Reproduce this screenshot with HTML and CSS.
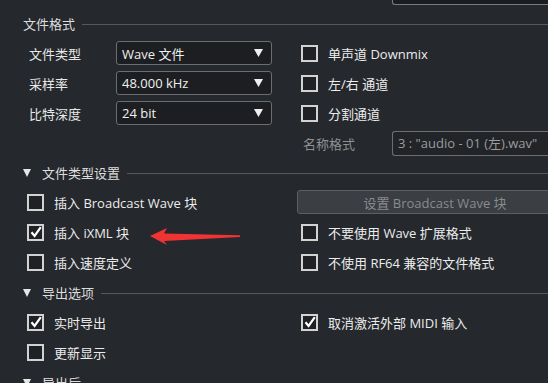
FILE: index.html
```html
<!DOCTYPE html>
<html>
<head>
<meta charset="utf-8">
<link rel="stylesheet" href="styles.css">
</head>
<body>
<div class="page">
  <div class="prev"><div class="prev-box"></div></div>

  <div class="section s1">
    <div class="head"><span class="head-text">文件格式</span><span class="rule"></span></div>
    <div class="grid">
      <div class="cell"><span class="flabel">文件类型</span><div class="select"><span>Wave 文件</span><svg class="sel-arrow" width="9" height="8" viewBox="0 0 9 8"><polygon points="0,0 9,0 4.5,8" fill="#f0f0f0"/></svg></div></div>
      <div class="cell r"><span class="cb"></span><span class="lbl">单声道 Downmix</span></div>
      <div class="cell"><span class="flabel">采样率</span><div class="select"><span>48.000 kHz</span><svg class="sel-arrow" width="9" height="8" viewBox="0 0 9 8"><polygon points="0,0 9,0 4.5,8" fill="#f0f0f0"/></svg></div></div>
      <div class="cell r"><span class="cb"></span><span class="lbl">左/右 通道</span></div>
      <div class="cell"><span class="flabel">比特深度</span><div class="select"><span>24 bit</span><svg class="sel-arrow" width="9" height="8" viewBox="0 0 9 8"><polygon points="0,0 9,0 4.5,8" fill="#f0f0f0"/></svg></div></div>
      <div class="cell r"><span class="cb"></span><span class="lbl">分割通道</span></div>
      <div class="cell"></div>
      <div class="cell r name-row"><span class="glabel">名称格式</span><div class="text-input">3 : "audio - 01 (左).wav"</div></div>
    </div>
  </div>

  <div class="section s2">
    <div class="head"><svg class="tri" width="8" height="8" viewBox="0 0 8 8"><polygon points="0,0 8,0 4,8" fill="#e6e6e6"/></svg><span class="head-text">文件类型设置</span><span class="rule"></span></div>
    <div class="grid">
      <div class="cell l"><span class="cb"></span><span class="lbl">插入 Broadcast Wave 块</span></div>
      <div class="cell b"><div class="btn">设置 Broadcast Wave 块</div></div>
      <div class="cell l"><span class="cb on"><svg width="12" height="12" viewBox="0 0 12 12"><path d="M1.5 6.2 L4.6 10 L10.8 1.2" fill="none" stroke="#ffffff" stroke-width="2.2"/></svg></span><span class="lbl">插入 iXML 块</span></div>
      <div class="cell r"><span class="cb"></span><span class="lbl">不要使用 Wave 扩展格式</span></div>
      <div class="cell l"><span class="cb"></span><span class="lbl">插入速度定义</span></div>
      <div class="cell r"><span class="cb"></span><span class="lbl">不使用 RF64 兼容的文件格式</span></div>
    </div>
    <svg class="arrow" width="92" height="20" viewBox="0 0 92 20"><polygon points="0,8 17,0 14,5.5 90,7.2 90,9 14,13 17,17" fill="#f03434"/></svg>
  </div>

  <div class="section s3">
    <div class="head"><svg class="tri" width="8" height="8" viewBox="0 0 8 8"><polygon points="0,0 8,0 4,8" fill="#e6e6e6"/></svg><span class="head-text">导出选项</span><span class="rule"></span></div>
    <div class="grid">
      <div class="cell l"><span class="cb on"><svg width="12" height="12" viewBox="0 0 12 12"><path d="M1.5 6.2 L4.6 10 L10.8 1.2" fill="none" stroke="#ffffff" stroke-width="2.2"/></svg></span><span class="lbl">实时导出</span></div>
      <div class="cell r"><span class="cb on"><svg width="12" height="12" viewBox="0 0 12 12"><path d="M1.5 6.2 L4.6 10 L10.8 1.2" fill="none" stroke="#ffffff" stroke-width="2.2"/></svg></span><span class="lbl">取消激活外部 MIDI 输入</span></div>
      <div class="cell l"><span class="cb"></span><span class="lbl">更新显示</span></div>
      <div class="cell"></div>
    </div>
  </div>

  <div class="section s4">
    <div class="head"><svg class="tri" width="8" height="8" viewBox="0 0 8 8"><polygon points="0,0 8,0 4,8" fill="#e6e6e6"/></svg><span class="head-text">导出后</span><span class="rule"></span></div>
  </div>
</div>
</body>
</html>
```
FILE: styles.css
```css
html, body {
  margin: 0;
  padding: 0;
  background: #25282c;
  overflow: hidden;
}
body {
  width: 548px;
  height: 383px;
  font-family: "Open Sans", "Noto Sans CJK SC", sans-serif;
  font-size: 13px;
  color: #e8e8e8;
}
.page {
  width: 548px;
  height: 383px;
  overflow: hidden;
  display: flow-root;
}
.prev {
  height: 5px;
}
.prev-box {
  margin-left: 392px;
  height: 4px;
  border: 1px solid #7a7c7f;
  border-top: none;
  border-right: none;
  border-radius: 0 0 0 3px;
  background: #1b1d20;
}
.section {
  padding-left: 23px;
  position: relative;
}
.s1 { margin-top: 12px; }
.s2 { margin-top: 11px; }
.s3 { margin-top: 12px; }
.s4 { margin-top: 12px; }
.head {
  display: flex;
  align-items: center;
  height: 14px;
  color: #dedede;
}
.head-text {
  line-height: 14px;
  white-space: nowrap;
}
.tri {
  margin-right: 11px;
  flex: none;
}
.rule {
  flex: 1;
  height: 1px;
  background: #56595c;
  margin-left: 7px;
}
.grid {
  display: grid;
  grid-template-columns: 274px 1fr;
  grid-auto-rows: 24px;
  row-gap: 6px;
  margin-top: 10px;
}
.cell {
  display: flex;
  align-items: center;
  white-space: nowrap;
  min-width: 0;
}
.cell.l { padding-left: 4px; }
.cell.r { padding-left: 4px; }
.flabel {
  width: 87px;
  padding-left: 6px;
  flex: none;
}
.select {
  width: 156px;
  height: 24px;
  box-sizing: border-box;
  border: 1px solid #6b6e71;
  border-radius: 3px;
  background: #1c1e21;
  display: flex;
  align-items: center;
  justify-content: space-between;
  padding: 0 8px 0 5px;
  color: #f0f0f0;
}
.sel-arrow { flex: none; }
.cb {
  width: 17px;
  height: 17px;
  box-sizing: border-box;
  border: 2px solid #d2d2d2;
  background: #1f2125;
  flex: none;
  display: flex;
  align-items: center;
  justify-content: center;
  margin-right: 10px;
}
.lbl { color: #ececec; }
.cell.name-row { padding-left: 6px; }
.glabel {
  color: #8e9093;
  width: 89px;
  flex: none;
}
.text-input {
  flex: none;
  width: 170px;
  height: 25px;
  box-sizing: border-box;
  border: 1px solid #6d7073;
  border-right: none;
  border-radius: 3px 0 0 3px;
  background: #222428;
  color: #9a9c9f;
  padding-left: 5px;
  line-height: 23px;
}
.cell.b { overflow: visible; }
.btn {
  flex: none;
  width: 276px;
  height: 24px;
  box-sizing: border-box;
  border: 1px solid #5c5f62;
  border-radius: 3px;
  background: #3b3e42;
  color: #8a8c8f;
  display: flex;
  align-items: center;
  justify-content: center;
}
.arrow {
  position: absolute;
  left: 150px;
  top: 62px;
}
```
